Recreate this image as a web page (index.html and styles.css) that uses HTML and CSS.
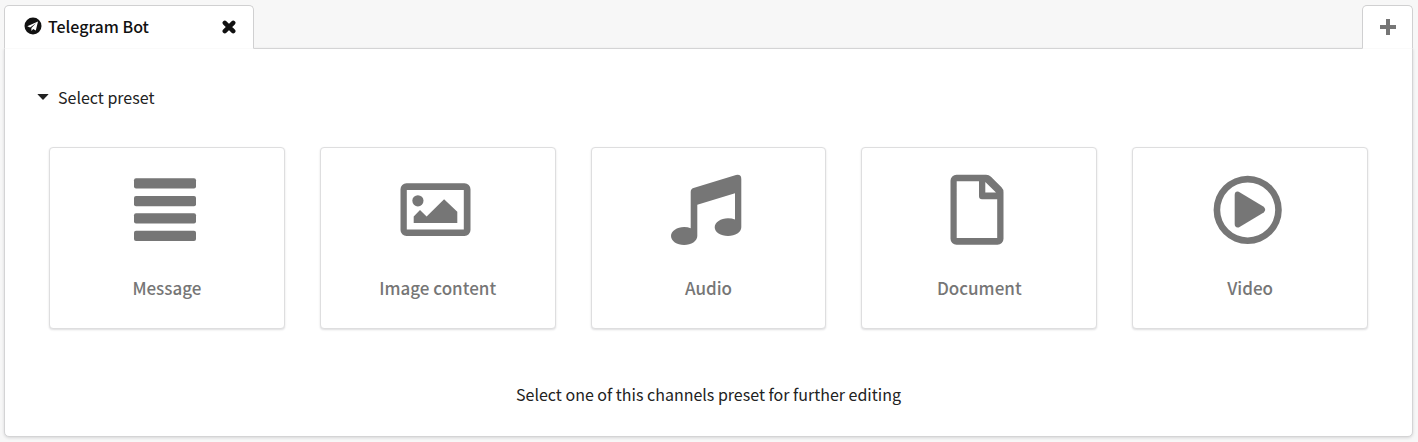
FILE: index.html
```html
<!DOCTYPE html>
<html lang="en">
<head>
  <meta charset="UTF-8" />
  <meta name="viewport" content="width=device-width, initial-scale=1.0" />
  <title>Telegram Bot</title>
  <link rel="stylesheet" href="styles.css">
</head>

<body>
  <!-- Channel tabs -->
  <div class="tabs">
    <div class="tab">
      <button type="button" class="tab-name">
        <svg class="tab-logo" viewBox="0 0 18 18" aria-hidden="true">
          <circle cx="9" cy="9" r="8.5" fill="#111" />
          <path d="M14 4.4L3.3 9.3l2.8 1.3L12 6.3 7.4 11v3l1.8-2 2.6 1.4z" fill="#fff" />
        </svg>
        Telegram Bot
      </button>
      <button type="button" class="tab-close" aria-label="Close tab">
        <svg viewBox="0 0 14 14" aria-hidden="true">
          <path d="M2.8 2.8l8.4 8.4M11.2 2.8l-8.4 8.4" stroke="currentColor" stroke-width="4.5" stroke-linecap="round" />
        </svg>
      </button>
    </div>
    <button type="button" class="tab tab-add" aria-label="Add channel">
      <svg viewBox="0 0 16 16" aria-hidden="true">
        <path d="M8 2v12M2 8h12" stroke="currentColor" stroke-width="4" stroke-linecap="square" />
      </svg>
    </button>
  </div>

  <div class="panel">
    <details open>
      <summary>
        <svg class="caret" viewBox="0 0 12 6" aria-hidden="true"><path d="M1 0h10q.8 0 .3.6L6.5 5.6q-.5.5-1 0L.7.6Q.2 0 1 0z" /></svg>
        Select preset
      </summary>

      <div class="presets">
        <button type="button" class="preset">
          <svg viewBox="0 0 72 72" aria-hidden="true">
            <rect x="5" y="4.3" width="62" height="10.3" rx="2" />
            <rect x="5" y="21.9" width="62" height="10.3" rx="2" />
            <rect x="5" y="39.2" width="62" height="10.3" rx="2" />
            <rect x="5" y="56.8" width="62" height="10.3" rx="2" />
          </svg>
          Message
        </button>
        <button type="button" class="preset">
          <svg viewBox="0 0 72 72" aria-hidden="true">
            <path fill-rule="evenodd" d="M6.5 9.2h58a6 6 0 0 1 6 6V56a6 6 0 0 1-6 6h-58a6 6 0 0 1-6-6V15.2a6 6 0 0 1 6-6zM6.8 16v39.5h57V16z" />
            <circle cx="17.9" cy="26.8" r="5.6" />
            <path d="M13.7 49V42.5l6.3-6.4 6.6 6.4L44.1 25.2l13.2 12.6V49z" />
          </svg>
          Image content
        </button>
        <button type="button" class="preset">
          <svg viewBox="0 0 72 72" aria-hidden="true">
            <path d="M66 .9q5.300-1 5.300 4v48.300c0 4.900-6 8.800-13.300 8.800s-13.300-4-13.300-8.800 6-8.900 13.300-8.900q4 0 7 1.300V19.300L27.300 30.700V62c0 5-6 9-13.200 9S1 67 1 62s6-9 13.100-9q3.700 0 6.600 1.200V18q0-2.900 2.800-3.900z" />
          </svg>
          Audio
        </button>
        <button type="button" class="preset">
          <svg viewBox="0 0 72 72" aria-hidden="true">
            <path fill-rule="evenodd" d="M15.5 .8h29.500q3 0 5 2L60.500 13.200q2 2 2 5V64.800a6 6 0 0 1-6 6h-41a6 6 0 0 1-6-6v-58a6 6 0 0 1 6-6zM15.700 7.200v56.900h40.500V25.200H41q-3 0-3-3V7.200zM44.300 8v10.600H55z" />
          </svg>
          Document
        </button>
        <button type="button" class="preset">
          <svg viewBox="0 0 72 72" aria-hidden="true">
            <path fill-rule="evenodd" d="M35.7 1.8a34.1 34.1 0 1 1 0 68.2 34.1 34.1 0 0 1 0-68.2zm0 6.6a27.5 27.5 0 1 0 0 55 27.5 27.5 0 0 0 0-55z" />
            <path d="M22.7 21q0-4 4-3.300L51.700 32.800q3 2.900 0 5.800L26.700 53.400q-4 .6-4-3.400z" />
          </svg>
          Video
        </button>
      </div>
    </details>

    <p class="hint">Select one of this channels preset for further editing</p>
  </div>
</body>
</html>
```
FILE: styles.css
```css
* {
  box-sizing: border-box;
}

body {
  margin: 0;
  padding: 5px 5px 5px 4px;
  background: #f7f7f7;
  font-family: "Noto Sans CJK SC", "Open Sans", sans-serif;
  font-size: 16px;
  line-height: 24px;
  color: #222;
}

button {
  font: inherit;
  color: inherit;
  cursor: pointer;
}

/* Tabs */
.tabs {
  position: relative;
  display: flex;
  justify-content: space-between;
}

.tab {
  display: flex;
  align-items: center;
  justify-content: space-between;
  width: 250px;
  height: 44px;
  margin-bottom: -1px;
  padding: 0 17px 2px 19px;
  background: #fff;
  border: 1px solid #d0d0d1;
  border-bottom-color: #fafafa;
  border-radius: 5px 5px 0 0;
}

.tab-name,
.tab-close {
  display: flex;
  align-items: center;
  padding: 0;
  background: none;
  border: 0;
  color: #111;
}

.tab-name {
  gap: 6px;
  font-weight: 500;
}

.tab-logo {
  width: 18px;
  height: 18px;
}

.tab-close {
  padding-top: 2px;
}

.tab-close svg {
  width: 14px;
  height: 14px;
}

.tab-add {
  justify-content: center;
  width: 51px;
  padding: 0;
  color: #767676;
}

.tab-add svg {
  width: 16px;
  height: 16px;
}

/* Panel */
.panel {
  padding: 36px 44px 30px;
  background: #fff;
  border: 1px solid #d4d4d5;
  border-radius: 0 0 5px 5px;
  box-shadow: 0 1px 3px rgba(34, 36, 38, 0.15);
}

summary {
  display: flex;
  align-items: center;
  gap: 9px;
  margin-left: -12px;
  list-style: none;
  cursor: pointer;
}

.caret {
  width: 12px;
  height: 6px;
  fill: #222;
}

.presets {
  display: grid;
  grid-template-columns: repeat(5, 1fr);
  gap: 35px;
  margin-top: 38px;
}

.preset {
  display: flex;
  flex-direction: column;
  align-items: center;
  gap: 30px;
  padding: 26px 16px 28px;
  background: #fff;
  border: 1px solid #dededf;
  border-radius: 4px;
  box-shadow: 0 1px 2px rgba(34, 36, 38, 0.15);
  color: #767676;
  font-size: 17px;
  font-weight: 500;
}

.preset svg {
  width: 72px;
  height: 72px;
  margin-right: 4px;
  fill: currentColor;
}

.hint {
  margin: 53px 0 0;
  text-align: center;
}
```
